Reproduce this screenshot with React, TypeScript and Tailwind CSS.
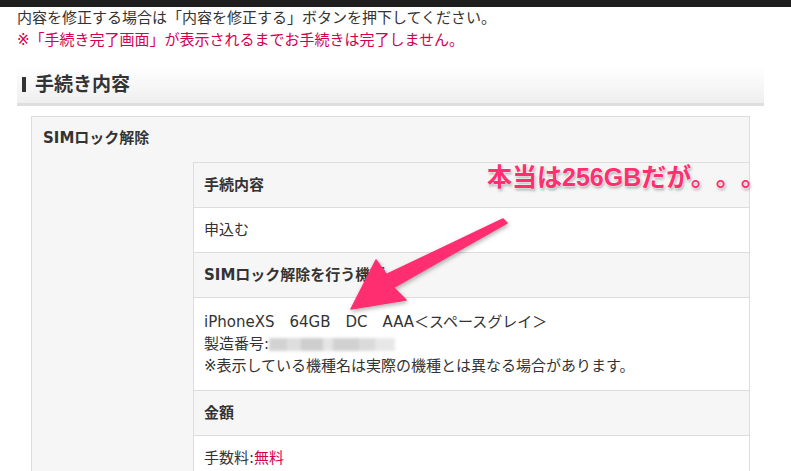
const font = "font-['DejaVu_Sans','Noto_Sans_CJK_JP',sans-serif] [text-spacing-trim:space-all]";

const rows = [
  { head: true, lines: ["手続内容"] },
  { head: false, lines: ["申込む"] },
  { head: true, lines: ["SIMロック解除を行う機種"] },
];

function SerialBlur() {
  return (
    <span className="inline-flex items-center h-[15px] align-middle blur-[1.5px] opacity-80">
      <span className="w-[18px] h-[13px] bg-[#c8c8c8]" />
      <span className="w-[14px] h-[13px] bg-[#d6d6d6]" />
      <span className="w-[22px] h-[13px] bg-[#c2c2c2]" />
      <span className="w-[10px] h-[13px] bg-[#dedede]" />
      <span className="w-[26px] h-[13px] bg-[#c6c6c6]" />
      <span className="w-[16px] h-[13px] bg-[#d2d2d2]" />
      <span className="w-[20px] h-[13px] bg-[#e2e2e2]" />
    </span>
  );
}

function Arrow() {
  return (
    <svg
      className="absolute left-0 top-0 pointer-events-none"
      width="791"
      height="471"
      viewBox="0 0 791 471"
    >
      <defs>
        <filter id="sh" x="-20%" y="-20%" width="140%" height="140%">
          <feDropShadow dx="1" dy="2" stdDeviation="2" floodColor="#000" floodOpacity="0.3" />
        </filter>
      </defs>
      <polygon
        points="351,309 376,260 386.5,274.5 503,219 507,223 393.5,287.5 406,300"
        fill="#ff2f70"
        stroke="#ff2f70"
        strokeWidth="1.5"
        strokeLinejoin="round"
        filter="url(#sh)"
      />
    </svg>
  );
}

export default function App() {
  return (
    <div className={`relative w-[791px] h-[471px] overflow-hidden bg-white text-[#333] ${font}`}>
      <div className="h-[7px] bg-[#1e1e1e]" />

      {/* intro notes */}
      <div className="pl-[17px] text-[15px] leading-[22px]">
        <p>内容を修正する場合は「内容を修正する」ボタンを押下してください。</p>
        <p className="text-[#d2004f]">※「手続き完了画面」が表示されるまでお手続きは完了しません。</p>
      </div>

      <div className="ml-[17px] w-[747px] mt-[15px]">
        {/* section heading */}
        <div className="h-[40px] flex items-center bg-gradient-to-b from-white to-[#efefef] border-b-[3px] border-[#dedede]">
          <span className="ml-[5px] w-[4px] h-[15px] bg-[#333]" />
          <h2 className="ml-[9px] text-[19px] font-bold leading-none">手続き内容</h2>
        </div>

        {/* outer box */}
        <div className="mt-[10px] mx-[14px] border border-b-0 border-[#dddddd] bg-[#f6f6f6]">
          <div className="h-[45px] px-[11px] pt-[10px] text-[15px] leading-[22px] font-bold">
            SIMロック解除
          </div>
          <div className="ml-[161px] border-l border-t border-[#dddddd] text-[15px] leading-[22px]">
            {rows.map((r, i) => (
              <div
                key={i}
                className={`px-[10px] py-[11px] border-b border-[#dddddd] ${
                  r.head ? "bg-[#f6f6f6] font-bold" : "bg-white"
                }`}
              >
                {r.lines[0]}
              </div>
            ))}
            <div className="px-[10px] pt-[13px] pb-[13px] border-b border-[#dddddd] bg-white">
              <p>iPhoneXS　64GB　DC　AAA＜スペースグレイ＞</p>
              <p className="flex items-center">
                製造番号:
                <SerialBlur />
              </p>
              <p>※表示している機種名は実際の機種とは異なる場合があります。</p>
            </div>
            <div className="px-[10px] py-[11px] border-b border-[#dddddd] bg-[#f6f6f6] font-bold">
              金額
            </div>
            <div className="px-[10px] py-[11px] bg-white h-[60px]">
              手数料:<span className="text-[#d2004f]">無料</span>
            </div>
          </div>
        </div>
      </div>

      <Arrow />

      {/* annotation */}
      <div className="absolute left-[487px] top-[163px] text-[25px] leading-[28px] font-bold text-[#ff2f70] font-['Liberation_Sans','Noto_Sans_CJK_JP',sans-serif] [text-spacing-trim:space-all] [text-shadow:0_0_2px_#fff,0_0_2px_#fff,1px_2px_3px_rgba(0,0,0,0.35)] whitespace-nowrap">
        本当は256GBだが。。。
      </div>
    </div>
  );
}
